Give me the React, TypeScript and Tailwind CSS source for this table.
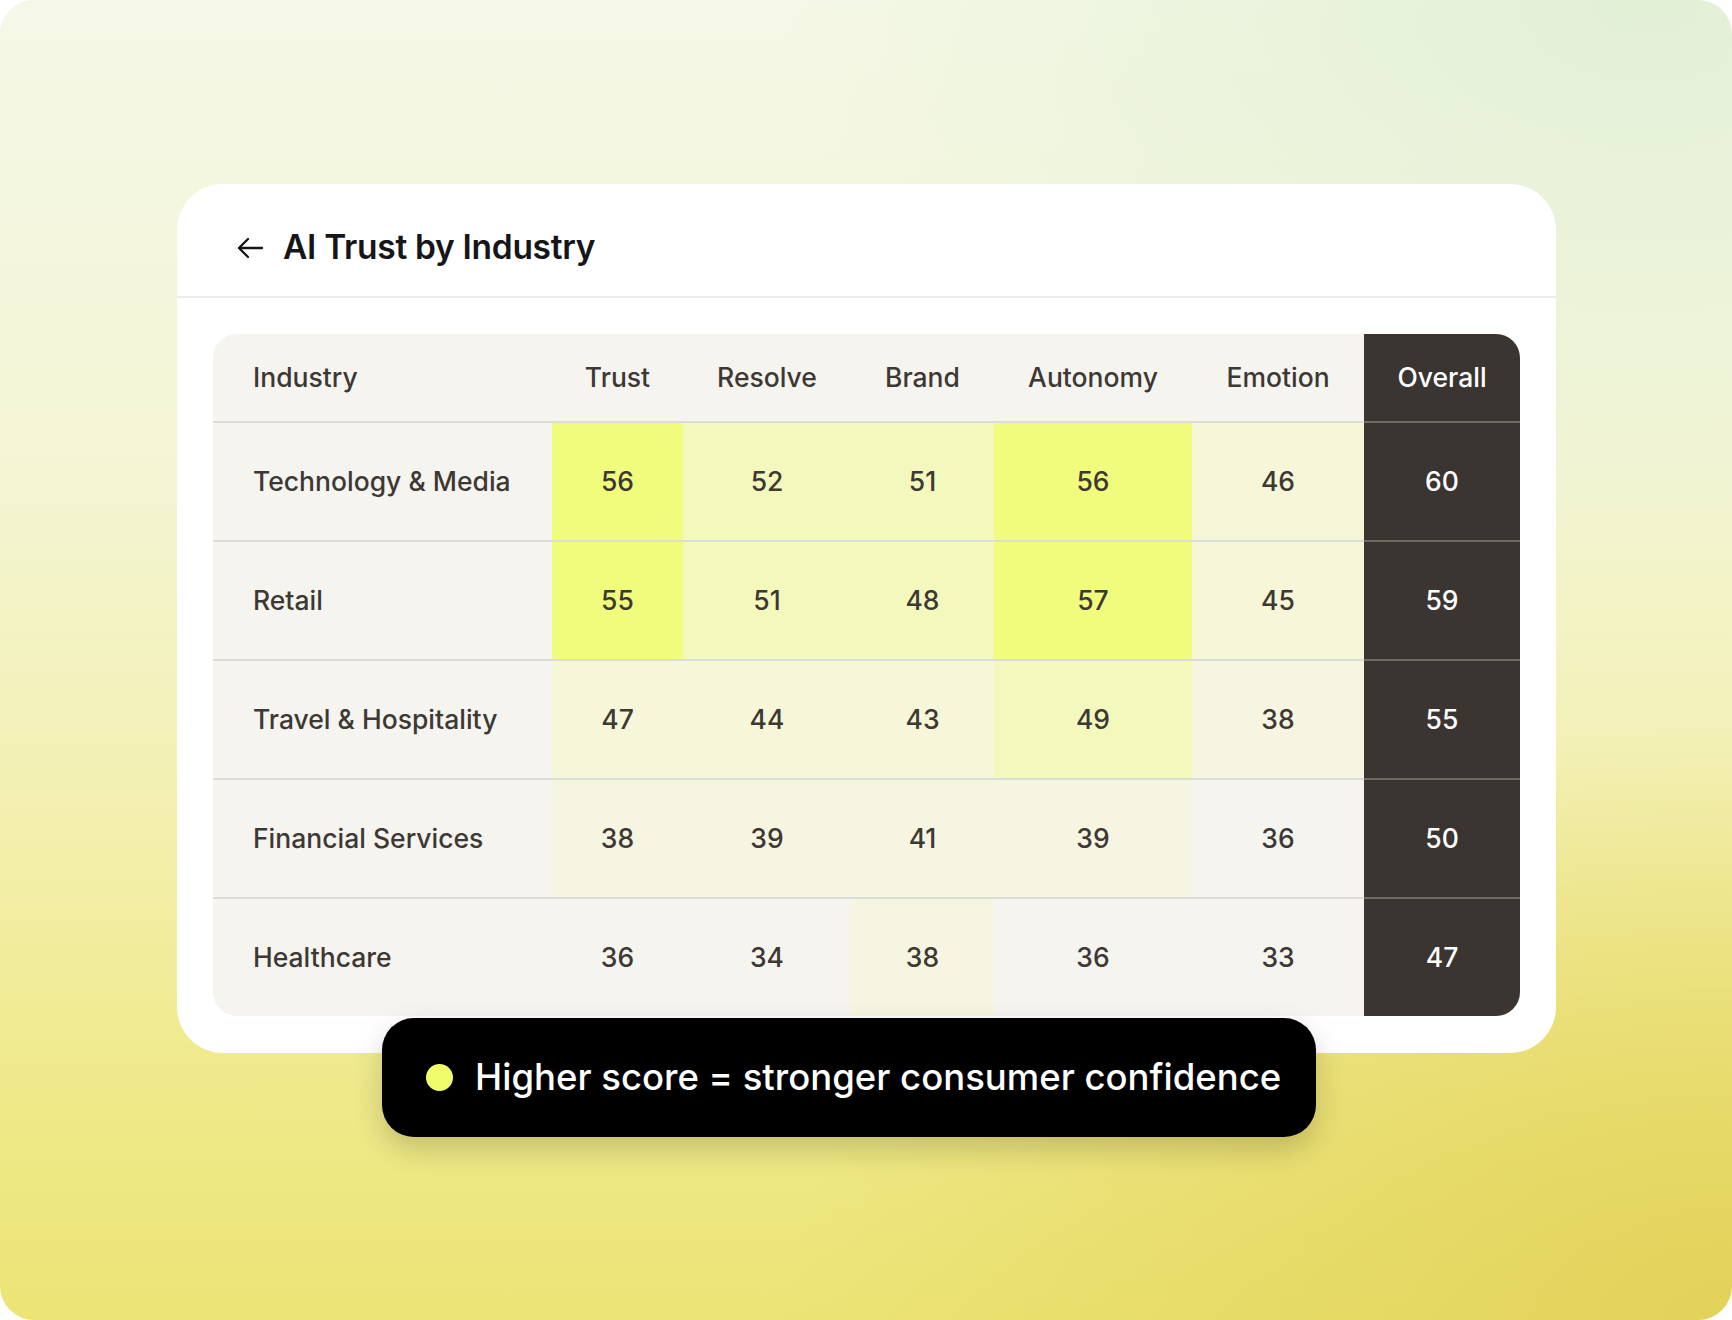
import React from "react";

type Row = { name: string; vals: number[]; overall: number };

const rows: Row[] = [
  { name: "Technology & Media", vals: [56, 52, 51, 56, 46], overall: 60 },
  { name: "Retail", vals: [55, 51, 48, 57, 45], overall: 59 },
  { name: "Travel & Hospitality", vals: [47, 44, 43, 49, 38], overall: 55 },
  { name: "Financial Services", vals: [38, 39, 41, 39, 36], overall: 50 },
  { name: "Healthcare", vals: [36, 34, 38, 36, 33], overall: 47 },
];

const headers = ["Trust", "Resolve", "Brand", "Autonomy", "Emotion"];

function cellBg(v: number): string {
  if (v >= 55) return "bg-[#f1fc7d]";
  if (v >= 48) return "bg-[#f3f9bd]";
  if (v >= 43) return "bg-[#f5f7d8]";
  if (v >= 37) return "bg-[#f5f5e2]";
  return "bg-[#f5f4ef]";
}

const cols = "grid grid-cols-[339px_131px_168px_143px_198px_172px_156px]";

export default function App() {
  return (
    <div className="w-[1732px] h-[1320px] bg-white font-['Inter','Liberation_Sans',sans-serif]">
      <div className="relative w-full h-full rounded-[34px] overflow-hidden bg-[image:radial-gradient(ellipse_55%_45%_at_100%_100%,#e2d259_0%,rgba(226,210,89,0)_100%),radial-gradient(ellipse_50%_40%_at_95%_0%,#e2f0d6_0%,rgba(226,240,214,0)_100%),linear-gradient(180deg,#f5f8e7_0%,#f3f5d4_35%,#f3f0b2_60%,#f0ea8e_80%,#ebe475_100%)] pt-[184px] pl-[177px]">
        <div className="w-[1379px] bg-white rounded-[46px]">
          <div className="h-[114px] flex items-center pt-[16px] pl-[60px] gap-[19px] border-b-2 border-[#ececea]">
            <svg width="27" height="22" viewBox="0 0 27 22" fill="none" stroke="#15151a" strokeWidth="2.3" strokeLinecap="round" strokeLinejoin="round">
              <path d="M25 11H2.5" />
              <path d="M11 2L2 11L11 20" />
            </svg>
            <h1 className="text-[33.5px] font-semibold text-[#15151a] tracking-[-0.3px] leading-none">AI Trust by Industry</h1>
          </div>
          <div className="p-[36px] pb-[37px]">
            <div className="rounded-[24px] overflow-hidden bg-[#f5f4ef] text-[26.5px] font-medium text-[#3d3834]">
              <div className={`${cols} h-[87px]`}>
                <div className="flex items-center pl-[40px]">Industry</div>
                {headers.map((h) => (
                  <div key={h} className="flex items-center justify-center">{h}</div>
                ))}
                <div className="flex items-center justify-center bg-[#3a3531] text-white">Overall</div>
              </div>
              {rows.map((r) => (
                <div key={r.name} className={`${cols} h-[119px]`}>
                  <div className="flex items-center pl-[40px] border-t-2 border-[#dedcd7]">{r.name}</div>
                  {r.vals.map((v, i) => (
                    <div key={i} className={`flex items-center justify-center border-t-2 border-[#dedcd7] ${cellBg(v)}`}>
                      {v}
                    </div>
                  ))}
                  <div className="flex items-center justify-center bg-[#3a3531] text-white border-t-2 border-[#706a64]">
                    {r.overall}
                  </div>
                </div>
              ))}
            </div>
          </div>
        </div>
        <div className="relative mt-[-35px] ml-[205px] w-[934px] h-[119px] bg-black rounded-[32px] flex items-center pl-[44px] gap-[22px] shadow-[0_12px_30px_rgba(0,0,0,0.18)]">
          <div className="w-[27px] h-[27px] rounded-full bg-[#f0fc6a]" />
          <span className="text-[36.5px] font-medium text-white leading-none">
            Higher score = stronger consumer confidence
          </span>
        </div>
      </div>
    </div>
  );
}
